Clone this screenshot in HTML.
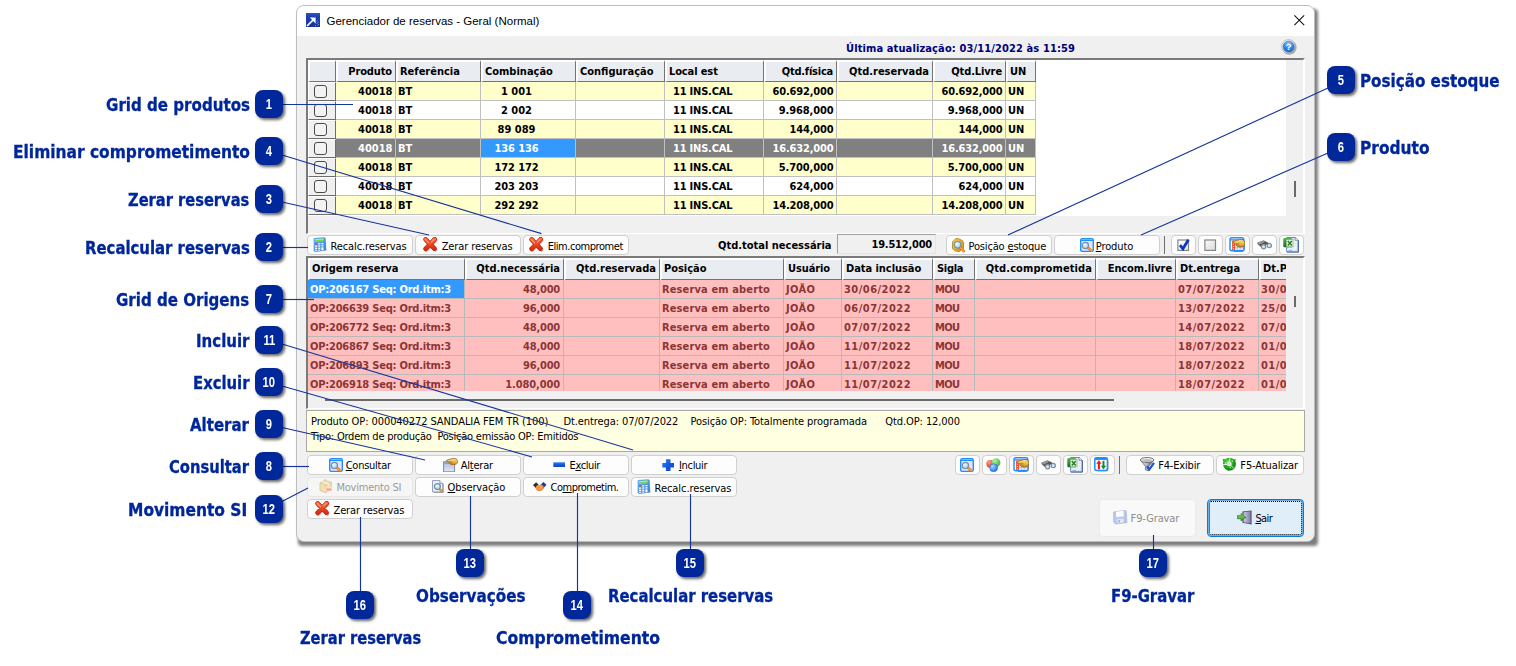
<!DOCTYPE html>
<html lang="pt-BR"><head><meta charset="utf-8"><title>Gerenciador de reservas</title>
<style>
*{box-sizing:border-box;margin:0;padding:0}
html,body{width:1516px;height:666px;overflow:hidden;background:#fff}
body{position:relative;font-family:"DejaVu Sans Condensed","Liberation Sans",sans-serif;font-size:11px;color:#000}
.a{position:absolute;white-space:pre}
#win{position:absolute;left:296px;top:5px;width:1019px;height:537px;background:#f0f0f0;border:1px solid #bdbdbd;border-radius:8px;overflow:hidden}
#shadow{position:absolute;left:298px;top:9px;width:1019.5px;height:536.5px;background:#7e7e7e;border-radius:4px;filter:blur(1.5px)}
#tb{position:absolute;left:0;top:0;width:100%;height:30px;background:#fff}
#title{position:absolute;left:29.5px;top:8px;font-family:"Liberation Sans",sans-serif;font-size:11.5px;line-height:14px;white-space:pre}
.grid{position:absolute;background:#f0f0f0;border-top:2px solid #7a7a7a;border-left:2px solid #7a7a7a;border-right:2px solid #fff;border-bottom:1px solid #fff;overflow:hidden}
.hc{position:absolute;background:#e9edf1;border-top:2px solid #fff;border-left:2px solid #fff;border-right:1px solid #737373;border-bottom:1px solid #737373;font-weight:bold;white-space:pre;overflow:hidden}
.c{position:absolute;border-right:1px solid #c0c0c0;border-bottom:1px solid #c0c0c0;font-weight:bold;white-space:pre;overflow:hidden;height:19px;line-height:18px;padding-top:1px}
.ic{position:absolute;background:#f0f0f0;border-top:1px solid #fff;border-left:1px solid #fff;border-right:1px solid #6d6d6d;border-bottom:1px solid #6d6d6d;height:19px}
.cb{position:absolute;left:5px;top:2px;width:13px;height:13px;border:1px solid #4a4a4a;border-radius:3px;background:#f3f3f3}
.btn{position:absolute;background:#fdfdfd;border:1px solid #d0d0d0;border-radius:4px;white-space:pre}
.btn span{position:absolute;white-space:pre;line-height:13px}
.btn svg{position:absolute}
u{text-decoration:underline;text-underline-offset:1px}
.badge{position:absolute;width:28px;height:28px;border-radius:8px;background:#00289a;box-shadow:2px 2px 3px rgba(0,0,0,.6);color:#fff;font-family:"Liberation Sans",sans-serif;font-weight:bold;font-size:14px;line-height:28px;text-align:center}
.badge span{display:inline-block;transform:scaleX(.8)}
.lbl{position:absolute;white-space:pre;font-weight:bold;font-size:17.5px;line-height:22px;color:#00279a;-webkit-text-stroke:.3px #00279a;transform-origin:0 0}
</style></head><body>
<div id="shadow"></div>
<div id="win">
<div id="tb"></div>
<div id="title">Gerenciador de reservas - Geral (Normal)</div>
<svg class="a" style="left:9px;top:7px;" width="14" height="14" viewBox="0 0 14 14"><defs><linearGradient id="g1" x1="0" y1="0" x2="0" y2="1"><stop offset="0" stop-color="#2c55c8"/><stop offset=".25" stop-color="#1c41b0"/><stop offset="1" stop-color="#16349a"/></linearGradient></defs><rect width="14" height="14" fill="url(#g1)"/><path d="M1 13 L7.2 6.8" stroke="#fff" stroke-width="1.7"/><path d="M3.8 4.6 H9.6 V10.6 Z" fill="#fff"/><path d="M11 8.5l1 -1M10.5 11l2-2M11.5 12.5l1.5-1.5M9 13l1-1" stroke="#7fa0e8" stroke-width=".9"/></svg>
<svg class="a" style="left:996.5999999999999px;top:8.8px" width="11" height="11" viewBox="0 0 11 11"><path d="M0.4 0.4 L10.2 10.2 M10.2 0.4 L0.4 10.2" stroke="#111" stroke-width="1.05" fill="none"/></svg>
<div class="a" style="left:549px;top:36px;font-weight:bold;color:#00007b;line-height:14px;letter-spacing:0.119px;">Última atualização: 03/11/2022 às 11:59</div>
<svg class="a" style="left:983.8px;top:33px;" width="16.5" height="16.5" viewBox="0 0 16.5 16.5"><defs><radialGradient id="g2" cx="50%" cy="22%" r="85%"><stop offset="0" stop-color="#8ccaff"/><stop offset=".55" stop-color="#2f86e8"/><stop offset="1" stop-color="#1858bd"/></radialGradient><linearGradient id="g3" x1="0" y1="0" x2="1" y2="1"><stop offset="0" stop-color="#ffffff"/><stop offset=".5" stop-color="#e6e6e6"/><stop offset="1" stop-color="#7d7d7d"/></linearGradient></defs><circle cx="8.4" cy="8.6" r="7.2" fill="#6a6a6a" opacity=".5"/><circle cx="7.6" cy="7.6" r="7" fill="url(#g3)" stroke="#a6a6a6" stroke-width=".7"/><circle cx="7.6" cy="7.6" r="5.5" fill="url(#g2)" stroke="#2a62b8" stroke-width=".5"/><text x="7.6" y="11.1" font-family="Liberation Sans,sans-serif" font-weight="bold" font-size="9.5" fill="#fff" text-anchor="middle">?</text></svg>
<div class="grid" style="left:9px;top:52px;width:999px;height:176px">
<div class="a" style="left:0;top:0;width:978px;height:156px;background:#fff"></div>
<div class="hc" style="left:0px;top:0;width:28px;height:22px;line-height:19px;padding-left:2px;"></div><div class="hc" style="left:28px;top:0;width:60px;height:22px;line-height:19px;padding-right:3px;text-align:right;letter-spacing:-0.123px;">Produto</div><div class="hc" style="left:88px;top:0;width:85px;height:22px;line-height:19px;padding-left:2px;">Referência</div><div class="hc" style="left:173px;top:0;width:95px;height:22px;line-height:19px;padding-left:2px;">Combinação</div><div class="hc" style="left:268px;top:0;width:89px;height:22px;line-height:19px;padding-left:2px;">Configuração</div><div class="hc" style="left:357px;top:0;width:99px;height:22px;line-height:19px;padding-left:2px;letter-spacing:-0.12px;">Local est</div><div class="hc" style="left:456px;top:0;width:73px;height:22px;line-height:19px;padding-right:3px;text-align:right;letter-spacing:-0.227px;">Qtd.física</div><div class="hc" style="left:529px;top:0;width:96px;height:22px;line-height:19px;padding-right:3px;text-align:right;">Qtd.reservada</div><div class="hc" style="left:625px;top:0;width:73px;height:22px;line-height:19px;padding-right:3px;text-align:right;letter-spacing:-0.109px;">Qtd.Livre</div><div class="hc" style="left:698px;top:0;width:30px;height:22px;line-height:19px;padding-left:2px;">UN</div>
<div class="ic" style="left:0;top:22px;width:28px"><div class="cb"></div></div><div class="c" style="left:28px;top:22px;width:60px;background:#ffffcc;color:#000;padding-right:2.5px;text-align:right;">40018</div><div class="c" style="left:88px;top:22px;width:85px;background:#ffffcc;color:#000;padding-left:2px;">BT</div><div class="c" style="left:173px;top:22px;width:95px;background:#ffffcc;color:#000;padding-right:23px;text-align:center;">1 001</div><div class="c" style="left:268px;top:22px;width:89px;background:#ffffcc;color:#000;padding-left:2px;"></div><div class="c" style="left:357px;top:22px;width:99px;background:#ffffcc;color:#000;padding-left:8px;letter-spacing:-0.205px;">11 INS.CAL</div><div class="c" style="left:456px;top:22px;width:73px;background:#ffffcc;color:#000;padding-right:2.5px;text-align:right;letter-spacing:-0.161px;">60.692,000</div><div class="c" style="left:529px;top:22px;width:96px;background:#ffffcc;color:#000;padding-right:2.5px;text-align:right;"></div><div class="c" style="left:625px;top:22px;width:73px;background:#ffffcc;color:#000;padding-right:2.5px;text-align:right;letter-spacing:-0.161px;">60.692,000</div><div class="c" style="left:698px;top:22px;width:30px;background:#ffffcc;color:#000;padding-left:2px;">UN</div>
<div class="ic" style="left:0;top:41px;width:28px"><div class="cb"></div></div><div class="c" style="left:28px;top:41px;width:60px;background:#ffffff;color:#000;padding-right:2.5px;text-align:right;">40018</div><div class="c" style="left:88px;top:41px;width:85px;background:#ffffff;color:#000;padding-left:2px;">BT</div><div class="c" style="left:173px;top:41px;width:95px;background:#ffffff;color:#000;padding-right:23px;text-align:center;">2 002</div><div class="c" style="left:268px;top:41px;width:89px;background:#ffffff;color:#000;padding-left:2px;"></div><div class="c" style="left:357px;top:41px;width:99px;background:#ffffff;color:#000;padding-left:8px;letter-spacing:-0.205px;">11 INS.CAL</div><div class="c" style="left:456px;top:41px;width:73px;background:#ffffff;color:#000;padding-right:2.5px;text-align:right;letter-spacing:-0.115px;">9.968,000</div><div class="c" style="left:529px;top:41px;width:96px;background:#ffffff;color:#000;padding-right:2.5px;text-align:right;"></div><div class="c" style="left:625px;top:41px;width:73px;background:#ffffff;color:#000;padding-right:2.5px;text-align:right;letter-spacing:-0.115px;">9.968,000</div><div class="c" style="left:698px;top:41px;width:30px;background:#ffffff;color:#000;padding-left:2px;">UN</div>
<div class="ic" style="left:0;top:60px;width:28px"><div class="cb"></div></div><div class="c" style="left:28px;top:60px;width:60px;background:#ffffcc;color:#000;padding-right:2.5px;text-align:right;">40018</div><div class="c" style="left:88px;top:60px;width:85px;background:#ffffcc;color:#000;padding-left:2px;">BT</div><div class="c" style="left:173px;top:60px;width:95px;background:#ffffcc;color:#000;padding-right:23px;text-align:center;">89 089</div><div class="c" style="left:268px;top:60px;width:89px;background:#ffffcc;color:#000;padding-left:2px;"></div><div class="c" style="left:357px;top:60px;width:99px;background:#ffffcc;color:#000;padding-left:8px;letter-spacing:-0.205px;">11 INS.CAL</div><div class="c" style="left:456px;top:60px;width:73px;background:#ffffcc;color:#000;padding-right:2.5px;text-align:right;letter-spacing:-0.154px;">144,000</div><div class="c" style="left:529px;top:60px;width:96px;background:#ffffcc;color:#000;padding-right:2.5px;text-align:right;"></div><div class="c" style="left:625px;top:60px;width:73px;background:#ffffcc;color:#000;padding-right:2.5px;text-align:right;letter-spacing:-0.154px;">144,000</div><div class="c" style="left:698px;top:60px;width:30px;background:#ffffcc;color:#000;padding-left:2px;">UN</div>
<div class="ic" style="left:0;top:79px;width:28px"><div class="cb"></div></div><div class="c" style="left:28px;top:79px;width:60px;background:#808080;color:#fff;padding-right:2.5px;text-align:right;">40018</div><div class="c" style="left:88px;top:79px;width:85px;background:#808080;color:#fff;padding-left:2px;">BT</div><div class="c" style="left:173px;top:79px;width:95px;background:#808080;color:#fff;padding-right:23px;text-align:center;background:#3399ff;letter-spacing:-0.074px;">136 136</div><div class="c" style="left:268px;top:79px;width:89px;background:#808080;color:#fff;padding-left:2px;"></div><div class="c" style="left:357px;top:79px;width:99px;background:#808080;color:#fff;padding-left:8px;letter-spacing:-0.205px;">11 INS.CAL</div><div class="c" style="left:456px;top:79px;width:73px;background:#808080;color:#fff;padding-right:2.5px;text-align:right;letter-spacing:-0.161px;">16.632,000</div><div class="c" style="left:529px;top:79px;width:96px;background:#808080;color:#fff;padding-right:2.5px;text-align:right;"></div><div class="c" style="left:625px;top:79px;width:73px;background:#808080;color:#fff;padding-right:2.5px;text-align:right;letter-spacing:-0.161px;">16.632,000</div><div class="c" style="left:698px;top:79px;width:30px;background:#808080;color:#fff;padding-left:2px;">UN</div>
<div class="ic" style="left:0;top:98px;width:28px"><div class="cb"></div></div><div class="c" style="left:28px;top:98px;width:60px;background:#ffffcc;color:#000;padding-right:2.5px;text-align:right;">40018</div><div class="c" style="left:88px;top:98px;width:85px;background:#ffffcc;color:#000;padding-left:2px;">BT</div><div class="c" style="left:173px;top:98px;width:95px;background:#ffffcc;color:#000;padding-right:23px;text-align:center;letter-spacing:-0.074px;">172 172</div><div class="c" style="left:268px;top:98px;width:89px;background:#ffffcc;color:#000;padding-left:2px;"></div><div class="c" style="left:357px;top:98px;width:99px;background:#ffffcc;color:#000;padding-left:8px;letter-spacing:-0.205px;">11 INS.CAL</div><div class="c" style="left:456px;top:98px;width:73px;background:#ffffcc;color:#000;padding-right:2.5px;text-align:right;letter-spacing:-0.115px;">5.700,000</div><div class="c" style="left:529px;top:98px;width:96px;background:#ffffcc;color:#000;padding-right:2.5px;text-align:right;"></div><div class="c" style="left:625px;top:98px;width:73px;background:#ffffcc;color:#000;padding-right:2.5px;text-align:right;letter-spacing:-0.115px;">5.700,000</div><div class="c" style="left:698px;top:98px;width:30px;background:#ffffcc;color:#000;padding-left:2px;">UN</div>
<div class="ic" style="left:0;top:117px;width:28px"><div class="cb"></div></div><div class="c" style="left:28px;top:117px;width:60px;background:#ffffff;color:#000;padding-right:2.5px;text-align:right;">40018</div><div class="c" style="left:88px;top:117px;width:85px;background:#ffffff;color:#000;padding-left:2px;">BT</div><div class="c" style="left:173px;top:117px;width:95px;background:#ffffff;color:#000;padding-right:23px;text-align:center;letter-spacing:-0.074px;">203 203</div><div class="c" style="left:268px;top:117px;width:89px;background:#ffffff;color:#000;padding-left:2px;"></div><div class="c" style="left:357px;top:117px;width:99px;background:#ffffff;color:#000;padding-left:8px;letter-spacing:-0.205px;">11 INS.CAL</div><div class="c" style="left:456px;top:117px;width:73px;background:#ffffff;color:#000;padding-right:2.5px;text-align:right;letter-spacing:-0.154px;">624,000</div><div class="c" style="left:529px;top:117px;width:96px;background:#ffffff;color:#000;padding-right:2.5px;text-align:right;"></div><div class="c" style="left:625px;top:117px;width:73px;background:#ffffff;color:#000;padding-right:2.5px;text-align:right;letter-spacing:-0.154px;">624,000</div><div class="c" style="left:698px;top:117px;width:30px;background:#ffffff;color:#000;padding-left:2px;">UN</div>
<div class="ic" style="left:0;top:136px;width:28px"><div class="cb"></div></div><div class="c" style="left:28px;top:136px;width:60px;background:#ffffcc;color:#000;padding-right:2.5px;text-align:right;">40018</div><div class="c" style="left:88px;top:136px;width:85px;background:#ffffcc;color:#000;padding-left:2px;">BT</div><div class="c" style="left:173px;top:136px;width:95px;background:#ffffcc;color:#000;padding-right:23px;text-align:center;letter-spacing:-0.074px;">292 292</div><div class="c" style="left:268px;top:136px;width:89px;background:#ffffcc;color:#000;padding-left:2px;"></div><div class="c" style="left:357px;top:136px;width:99px;background:#ffffcc;color:#000;padding-left:8px;letter-spacing:-0.205px;">11 INS.CAL</div><div class="c" style="left:456px;top:136px;width:73px;background:#ffffcc;color:#000;padding-right:2.5px;text-align:right;letter-spacing:-0.161px;">14.208,000</div><div class="c" style="left:529px;top:136px;width:96px;background:#ffffcc;color:#000;padding-right:2.5px;text-align:right;"></div><div class="c" style="left:625px;top:136px;width:73px;background:#ffffcc;color:#000;padding-right:2.5px;text-align:right;letter-spacing:-0.161px;">14.208,000</div><div class="c" style="left:698px;top:136px;width:30px;background:#ffffcc;color:#000;padding-left:2px;">UN</div>
<div class="a" style="left:986px;top:121px;width:2px;height:16px;background:#6a6a6a"></div>
</div>
<div class="btn" style="left:10px;top:229px;width:106px;height:20px;"><svg class="a" style="left:5px;top:1px;" width="14" height="15.5" viewBox="0 0 14 15.5"><defs><linearGradient id="g4" x1="0" y1="0" x2="1" y2="1"><stop offset="0" stop-color="#6ab4f8"/><stop offset="1" stop-color="#2f7fde"/></linearGradient></defs><path d="M1.6 1.6 L12.6 0.9 L13.4 13.6 L1.6 15 Z" fill="#355a8c" opacity=".7"/><path d="M0.6 1 L11.8 0.2 L12.4 13 L0.6 14.3 Z" fill="url(#g4)"/><path d="M2 2.2 L10.6 1.6 L10.7 4.4 L2 5 Z" fill="#7fd44a"/><path d="M2 2.2 L10.6 1.6 L10.65 2.6 L2 3.2 Z" fill="#b9ec8e"/><g fill="#fff"><rect x="5.2" y="6.2" width="2.1" height="1.3"/><rect x="8.4" y="6" width="2.1" height="1.3"/><rect x="2" y="8.5" width="2.1" height="1.3"/><rect x="5.2" y="8.4" width="2.1" height="1.3"/><rect x="8.4" y="8.2" width="2.1" height="1.3"/><rect x="2" y="10.7" width="2.1" height="1.3"/><rect x="5.2" y="10.6" width="2.1" height="1.3"/><rect x="8.4" y="10.3" width="2.1" height="3"/><rect x="2" y="12.7" width="2.1" height="1.1"/><rect x="5.2" y="12.5" width="2.1" height="1.1"/></g><rect x="2" y="6.3" width="2.2" height="1.3" fill="#e8402c"/></svg><span style="left:22.5px;top:3.6px;letter-spacing:-0.108px">Recalc.reservas</span></div>
<div class="btn" style="left:118px;top:229px;width:106px;height:20px;"><svg class="a" style="left:7px;top:1px;" width="15" height="15" viewBox="0 0 15 15"><defs><linearGradient id="g5" x1="0" y1="0" x2="0" y2="1"><stop offset="0" stop-color="#ff6a3c"/><stop offset="1" stop-color="#e02a10"/></linearGradient></defs><path d="M3.4 3.2 L12.2 12.4 M12.4 3 L3.4 12.6" stroke="#7a2a1a" stroke-opacity=".45" stroke-width="4.2" stroke-linecap="round" fill="none"/><path d="M2.6 2.4 L11.4 11.6 M11.6 2.2 L2.6 11.8" stroke="#b3260c" stroke-width="4.6" stroke-linecap="round" fill="none"/><path d="M2.6 2.4 L11.4 11.6 M11.6 2.2 L2.6 11.8" stroke="url(#g5)" stroke-width="3.4" stroke-linecap="round" fill="none"/><path d="M2.4 2.6 L5.6 5.8 M11 2.4 L8.6 5" stroke="#ff9a70" stroke-width="1.1" stroke-linecap="round" fill="none"/></svg><span style="left:25.7px;top:3.6px;letter-spacing:-0.115px">Zerar reservas</span></div>
<div class="btn" style="left:226px;top:229px;width:106px;height:20px;"><svg class="a" style="left:5px;top:1px;" width="15" height="15" viewBox="0 0 15 15"><defs><linearGradient id="g6" x1="0" y1="0" x2="0" y2="1"><stop offset="0" stop-color="#ff6a3c"/><stop offset="1" stop-color="#e02a10"/></linearGradient></defs><path d="M3.4 3.2 L12.2 12.4 M12.4 3 L3.4 12.6" stroke="#7a2a1a" stroke-opacity=".45" stroke-width="4.2" stroke-linecap="round" fill="none"/><path d="M2.6 2.4 L11.4 11.6 M11.6 2.2 L2.6 11.8" stroke="#b3260c" stroke-width="4.6" stroke-linecap="round" fill="none"/><path d="M2.6 2.4 L11.4 11.6 M11.6 2.2 L2.6 11.8" stroke="url(#g6)" stroke-width="3.4" stroke-linecap="round" fill="none"/><path d="M2.4 2.6 L5.6 5.8 M11 2.4 L8.6 5" stroke="#ff9a70" stroke-width="1.1" stroke-linecap="round" fill="none"/></svg><span style="left:23.7px;top:3.6px;letter-spacing:-0.447px">Elim.compromet</span></div>
<div class="a" style="left:421px;top:232.5px;font-weight:bold;line-height:14px">Qtd.total necessária</div>
<div class="a" style="left:540px;top:228px;width:99px;height:20px;border:1px solid #a0a0a0;border-right-color:#e3e3e3;border-bottom-color:#e3e3e3;background:#f0f0f0;font-weight:bold;text-align:right;padding-right:3px;line-height:19px;letter-spacing:-0.211px;">19.512,000</div>
<div class="btn" style="left:649px;top:229px;width:106px;height:20px;"><svg class="a" style="left:5px;top:1.6px;" width="14" height="15" viewBox="0 0 14 15"><defs><linearGradient id="g7" x1="0" y1="0" x2="1" y2="1"><stop offset="0" stop-color="#f6d060"/><stop offset="1" stop-color="#c8900f"/></linearGradient></defs><path d="M3.2 1.2 L5 0.2 L7.2 1 L10.4 2.6 L11.6 5 L11.4 10.6 L7 13.6 L3 12.8 L0.4 10.6 L0.4 4 Z" fill="url(#g7)" stroke="#b07a08" stroke-width=".8"/><defs><radialGradient id="g8" cx="40%" cy="35%" r="70%"><stop offset="0" stop-color="#eefaff"/><stop offset="1" stop-color="#8fd0f5"/></radialGradient></defs><circle cx="5.6" cy="6.8" r="3.3" fill="url(#g8)" stroke="#7f8c99" stroke-width="1.2"/><line x1="8.6" y1="10" x2="11.8" y2="13.2" stroke="#c8641a" stroke-width="2.6" stroke-linecap="round"/><line x1="8.6" y1="10" x2="11.8" y2="13.2" stroke="#ffa035" stroke-width="1.8" stroke-linecap="round"/></svg><span style="left:21.5px;top:3.6px;letter-spacing:-0.164px">Posição <u>e</u>stoque</span></div>
<div class="btn" style="left:757px;top:229px;width:106px;height:20px;"><svg class="a" style="left:25px;top:1.8px;" width="14.5" height="15" viewBox="0 0 14.5 15"><rect x="0.7" y="0.8" width="12.6" height="12.6" rx="1.6" fill="#e3e1ff" stroke="#1e90ff" stroke-width="1.4"/><rect x="0.7" y="0.6" width="12.6" height="2.4" rx="1" fill="#1e90ff"/><rect x="1.6" y="1" width="10.8" height=".9" fill="#7cc4ff"/><defs><radialGradient id="g9" cx="40%" cy="35%" r="70%"><stop offset="0" stop-color="#eefaff"/><stop offset="1" stop-color="#8fd0f5"/></radialGradient></defs><circle cx="5.4" cy="7.4" r="3.1" fill="url(#g9)" stroke="#7f8c99" stroke-width="1.2"/><line x1="8.5" y1="10.3" x2="11.3" y2="12.7" stroke="#c8641a" stroke-width="2.5" stroke-linecap="round"/><line x1="8.5" y1="10.3" x2="11.3" y2="12.7" stroke="#ffa035" stroke-width="1.7" stroke-linecap="round"/></svg><span style="left:40.7px;top:3.6px;letter-spacing:-0.077px"><u>P</u>roduto</span></div>
<div class="a" style="left:867px;top:230px;width:1px;height:18px;background:#6e6e6e"></div>
<div class="btn" style="left:874px;top:229px;width:24.5px;height:20px;"><svg class="a" style="left:4.6px;top:1.6px;" width="13.5" height="14" viewBox="0 0 13.5 14"><defs><linearGradient id="g10" x1="0" y1="0" x2="1" y2="1"><stop offset="0" stop-color="#fff"/><stop offset="1" stop-color="#e4e4e4"/></linearGradient></defs><rect x="0.9" y="2" width="10.6" height="10.4" fill="url(#g10)" stroke="#858585" stroke-width="1.2"/><path d="M3 7.2 L5.9 10.8 L11.4 1.8" stroke="#0c36bd" stroke-width="2.7" fill="none" stroke-linejoin="miter"/></svg></div>
<div class="btn" style="left:901px;top:229px;width:24.5px;height:20px;"><svg class="a" style="left:4.6px;top:1.6px;" width="13.5" height="14" viewBox="0 0 13.5 14"><defs><linearGradient id="g11" x1="0" y1="0" x2="1" y2="1"><stop offset="0" stop-color="#fbfbfb"/><stop offset="1" stop-color="#d9d9d9"/></linearGradient></defs><rect x="0.9" y="2" width="10.6" height="10.4" fill="url(#g11)" stroke="#858585" stroke-width="1.2"/></svg></div>
<div class="btn" style="left:928px;top:229px;width:24.5px;height:20px;"><svg class="a" style="left:2.6px;top:1px;" width="16.8" height="15.2" viewBox="0 0 16.8 15.2"><path d="M15.3 4 V12.4 Q15.3 14.4 13.4 14.4 H5" stroke="#5a3c14" stroke-opacity=".75" stroke-width="1" fill="none"/><rect x="1" y="0.8" width="13.8" height="13" rx="2" fill="#fff" stroke="#1e90ff" stroke-width="1.5"/><path d="M1.6 2.9 H14.2" stroke="#1e90ff" stroke-width="1.3"/><rect x="4.6" y="3.6" width="9.6" height="9.4" fill="#e4e2ff"/><path d="M4.6 5.9H14.2M4.6 8.2H14.2M4.6 10.5H14.2M8.4 3.6V13M11.3 3.6V13" stroke="#b4b0f0" stroke-width=".7"/><rect x="3.1" y="3.6" width="2.9" height="9.4" fill="#ff4d22"/><path d="M4.55 4.4v.9M4.55 6.7v.9M4.55 9v.9M4.55 11.3v.9" stroke="#ffe2d6" stroke-width="1.1"/><defs><linearGradient id="g12" x1="0" y1="0" x2="0" y2="1"><stop offset="0" stop-color="#fde29a"/><stop offset=".55" stop-color="#eab84c"/><stop offset="1" stop-color="#c98a1e"/></linearGradient></defs><g transform="translate(10.4,6.1) scale(1.0,1.22)"><path d="M-6.4 -0.6 C-5.6 -1.6 -3.2 -2.2 -1.6 -2.4 C-0.6 -3 1 -3.2 2.4 -3 C4.4 -2.8 5.6 -1.4 5.6 0.2 C5.6 2.2 3.6 3.2 1 3.2 C-1 3.2 -2.6 2.8 -3.2 1.6 C-3.4 1 -3 0.6 -3 0.6 C-4.2 0.6 -5.6 0.4 -6.4 -0.6 Z" fill="url(#g12)" stroke="#96640e" stroke-width=".8"/><path d="M-3 0.6 C-2 0.2 -0.8 0.2 0.2 0.8 M-2.6 1.8 C-1.6 1.4 -0.6 1.6 0 2" stroke="#96640e" stroke-width=".55" fill="none"/></g></svg></div>
<div class="btn" style="left:955px;top:229px;width:24.5px;height:20px;"><svg class="a" style="left:3.6px;top:3.8px;" width="15" height="10" viewBox="0 0 15 10"><defs><linearGradient id="g13" x1="0" y1="0" x2="1" y2="1"><stop offset="0" stop-color="#9a9a9a"/><stop offset=".5" stop-color="#555"/><stop offset="1" stop-color="#3a3a3a"/></linearGradient></defs><path d="M0.4 2.6 L6.4 0.2 L9.6 1.8 L13.8 4.6 L12.6 5.4 L9.8 4.2 L8.8 5.2 L6.8 4.2 L4.6 7.4 L0.4 4 Z" fill="url(#g13)"/><path d="M1 2.8 L6.2 0.9 L8 1.8 L2.8 4.2 Z" fill="#b0b0b0" opacity=".7"/><defs><radialGradient id="g14" cx="40%" cy="35%" r="70%"><stop offset="0" stop-color="#eefaff"/><stop offset="1" stop-color="#8fd0f5"/></radialGradient></defs><circle cx="6.6" cy="6.7" r="2.15" fill="url(#g14)" stroke="#7f8c99" stroke-width="1.2"/><defs><radialGradient id="g15" cx="40%" cy="35%" r="70%"><stop offset="0" stop-color="#eefaff"/><stop offset="1" stop-color="#8fd0f5"/></radialGradient></defs><circle cx="12.3" cy="5.6" r="2.15" fill="url(#g15)" stroke="#7f8c99" stroke-width="1.2"/></svg></div>
<div class="btn" style="left:982px;top:229px;width:24.5px;height:20px;"><svg class="a" style="left:2.6px;top:1px;" width="16.5" height="16" viewBox="0 0 16.5 16"><defs><linearGradient id="g16" x1="0" y1="0" x2="0" y2="1"><stop offset="0" stop-color="#58b552"/><stop offset="1" stop-color="#0a6e1e"/></linearGradient></defs><path d="M4 0.6 H12.6 L15.8 3.8 V15.6 H4 Z" fill="#20406e"/><path d="M3.6 0.5 H12.2 L15 3.3 V14.8 H3.6 Z" fill="#dbe6fb" stroke="#5478b8" stroke-width=".8"/><path d="M12.2 0.5 V3.3 H15" fill="#fff" stroke="#5478b8" stroke-width=".7"/><path d="M11.4 4.6v1.3M11.4 6.9v1.3M11.4 9.2v1.3M13.2 4.6v1.3M13.2 6.9v1.3M13.2 9.2v1.3" stroke="#fff" stroke-width="1.1"/><path d="M5 12 H12 M12.4 9.4 V12.6" stroke="#f4f8ff" stroke-width="1.1"/><path d="M5.6 13.4 H9.2" stroke="#8aa6e0" stroke-width=".9"/><path d="M0.3 2.2 Q0.3 1 1.6 1 H8.8 V3 H3 V8.4 H8.8 V10.2 H1.6 Q0.3 10.2 0.3 9 Z" fill="url(#g16)"/><rect x="3.4" y="2.6" width="6.6" height="7.2" fill="#e6f2dc" stroke="#7fb070" stroke-width=".6"/><path d="M4.8 4 L8.8 8.6 M8.8 4 L4.8 8.6" stroke="#2a7d2e" stroke-width="1.5"/></svg></div>
<div class="grid" style="left:9px;top:250px;width:999px;height:153px">
<div class="a" style="left:0;top:0;width:978px;height:133px;overflow:hidden;background:#ffbfbf">
<div class="hc" style="left:0px;top:0;width:157px;height:22px;line-height:18px;padding-left:2px;">Origem reserva</div><div class="hc" style="left:157px;top:0;width:99px;height:22px;line-height:18px;padding-right:3px;text-align:right;">Qtd.necessária</div><div class="hc" style="left:256px;top:0;width:96px;height:22px;line-height:18px;padding-right:3px;text-align:right;">Qtd.reservada</div><div class="hc" style="left:352px;top:0;width:124px;height:22px;line-height:18px;padding-left:2px;letter-spacing:-0.027px;">Posição</div><div class="hc" style="left:476px;top:0;width:58px;height:22px;line-height:18px;padding-left:2px;letter-spacing:-0.105px;">Usuário</div><div class="hc" style="left:534px;top:0;width:91px;height:22px;line-height:18px;padding-left:2px;letter-spacing:-0.047px;">Data inclusão</div><div class="hc" style="left:625px;top:0;width:42px;height:22px;line-height:18px;padding-left:2px;letter-spacing:-0.284px;">Sigla</div><div class="hc" style="left:667px;top:0;width:121px;height:22px;line-height:18px;padding-right:3px;text-align:right;letter-spacing:0.101px;">Qtd.comprometida</div><div class="hc" style="left:788px;top:0;width:80px;height:22px;line-height:18px;padding-right:3px;text-align:right;letter-spacing:-0.102px;">Encom.livre</div><div class="hc" style="left:868px;top:0;width:83px;height:22px;line-height:18px;padding-left:2px;letter-spacing:-0.056px;">Dt.entrega</div><div class="hc" style="left:951px;top:0;width:71px;height:22px;line-height:18px;padding-left:2px;">Dt.P</div>
<div class="c" style="left:0px;top:22px;width:157px;color:#8c3535;border-color:#b9b9b9;background:#3399ff;color:#fff;padding-left:2px;letter-spacing:-0.214px;">OP:206167 Seq: Ord.itm:3</div><div class="c" style="left:157px;top:22px;width:99px;color:#8c3535;border-color:#b9b9b9;padding-right:3px;text-align:right;letter-spacing:-0.201px;">48,000</div><div class="c" style="left:256px;top:22px;width:96px;color:#8c3535;border-color:#b9b9b9;padding-right:3px;text-align:right;"></div><div class="c" style="left:352px;top:22px;width:124px;color:#8c3535;border-color:#b9b9b9;padding-left:2px;letter-spacing:0.131px;">Reserva em aberto</div><div class="c" style="left:476px;top:22px;width:58px;color:#8c3535;border-color:#b9b9b9;padding-left:2px;letter-spacing:0.344px;">JOÃO</div><div class="c" style="left:534px;top:22px;width:91px;color:#8c3535;border-color:#b9b9b9;padding-left:2px;letter-spacing:0.467px;">30/06/2022</div><div class="c" style="left:625px;top:22px;width:42px;color:#8c3535;border-color:#b9b9b9;padding-left:2px;letter-spacing:-0.682px;">MOU</div><div class="c" style="left:667px;top:22px;width:121px;color:#8c3535;border-color:#b9b9b9;padding-right:3px;text-align:right;"></div><div class="c" style="left:788px;top:22px;width:80px;color:#8c3535;border-color:#b9b9b9;padding-right:3px;text-align:right;"></div><div class="c" style="left:868px;top:22px;width:83px;color:#8c3535;border-color:#b9b9b9;padding-left:2px;letter-spacing:0.467px;">07/07/2022</div><div class="c" style="left:951px;top:22px;width:71px;color:#8c3535;border-color:#b9b9b9;padding-left:2px;letter-spacing:0.467px;">30/07/2022</div>
<div class="c" style="left:0px;top:41px;width:157px;color:#8c3535;border-color:#b9b9b9;padding-left:2px;letter-spacing:-0.214px;">OP:206639 Seq: Ord.itm:3</div><div class="c" style="left:157px;top:41px;width:99px;color:#8c3535;border-color:#b9b9b9;padding-right:3px;text-align:right;letter-spacing:-0.201px;">96,000</div><div class="c" style="left:256px;top:41px;width:96px;color:#8c3535;border-color:#b9b9b9;padding-right:3px;text-align:right;"></div><div class="c" style="left:352px;top:41px;width:124px;color:#8c3535;border-color:#b9b9b9;padding-left:2px;letter-spacing:0.131px;">Reserva em aberto</div><div class="c" style="left:476px;top:41px;width:58px;color:#8c3535;border-color:#b9b9b9;padding-left:2px;letter-spacing:0.344px;">JOÃO</div><div class="c" style="left:534px;top:41px;width:91px;color:#8c3535;border-color:#b9b9b9;padding-left:2px;letter-spacing:0.467px;">06/07/2022</div><div class="c" style="left:625px;top:41px;width:42px;color:#8c3535;border-color:#b9b9b9;padding-left:2px;letter-spacing:-0.682px;">MOU</div><div class="c" style="left:667px;top:41px;width:121px;color:#8c3535;border-color:#b9b9b9;padding-right:3px;text-align:right;"></div><div class="c" style="left:788px;top:41px;width:80px;color:#8c3535;border-color:#b9b9b9;padding-right:3px;text-align:right;"></div><div class="c" style="left:868px;top:41px;width:83px;color:#8c3535;border-color:#b9b9b9;padding-left:2px;letter-spacing:0.467px;">13/07/2022</div><div class="c" style="left:951px;top:41px;width:71px;color:#8c3535;border-color:#b9b9b9;padding-left:2px;letter-spacing:0.467px;">25/07/2022</div>
<div class="c" style="left:0px;top:60px;width:157px;color:#8c3535;border-color:#b9b9b9;padding-left:2px;letter-spacing:-0.214px;">OP:206772 Seq: Ord.itm:3</div><div class="c" style="left:157px;top:60px;width:99px;color:#8c3535;border-color:#b9b9b9;padding-right:3px;text-align:right;letter-spacing:-0.201px;">48,000</div><div class="c" style="left:256px;top:60px;width:96px;color:#8c3535;border-color:#b9b9b9;padding-right:3px;text-align:right;"></div><div class="c" style="left:352px;top:60px;width:124px;color:#8c3535;border-color:#b9b9b9;padding-left:2px;letter-spacing:0.131px;">Reserva em aberto</div><div class="c" style="left:476px;top:60px;width:58px;color:#8c3535;border-color:#b9b9b9;padding-left:2px;letter-spacing:0.344px;">JOÃO</div><div class="c" style="left:534px;top:60px;width:91px;color:#8c3535;border-color:#b9b9b9;padding-left:2px;letter-spacing:0.467px;">07/07/2022</div><div class="c" style="left:625px;top:60px;width:42px;color:#8c3535;border-color:#b9b9b9;padding-left:2px;letter-spacing:-0.682px;">MOU</div><div class="c" style="left:667px;top:60px;width:121px;color:#8c3535;border-color:#b9b9b9;padding-right:3px;text-align:right;"></div><div class="c" style="left:788px;top:60px;width:80px;color:#8c3535;border-color:#b9b9b9;padding-right:3px;text-align:right;"></div><div class="c" style="left:868px;top:60px;width:83px;color:#8c3535;border-color:#b9b9b9;padding-left:2px;letter-spacing:0.467px;">14/07/2022</div><div class="c" style="left:951px;top:60px;width:71px;color:#8c3535;border-color:#b9b9b9;padding-left:2px;letter-spacing:0.467px;">07/07/2022</div>
<div class="c" style="left:0px;top:79px;width:157px;color:#8c3535;border-color:#b9b9b9;padding-left:2px;letter-spacing:-0.214px;">OP:206867 Seq: Ord.itm:3</div><div class="c" style="left:157px;top:79px;width:99px;color:#8c3535;border-color:#b9b9b9;padding-right:3px;text-align:right;letter-spacing:-0.201px;">48,000</div><div class="c" style="left:256px;top:79px;width:96px;color:#8c3535;border-color:#b9b9b9;padding-right:3px;text-align:right;"></div><div class="c" style="left:352px;top:79px;width:124px;color:#8c3535;border-color:#b9b9b9;padding-left:2px;letter-spacing:0.131px;">Reserva em aberto</div><div class="c" style="left:476px;top:79px;width:58px;color:#8c3535;border-color:#b9b9b9;padding-left:2px;letter-spacing:0.344px;">JOÃO</div><div class="c" style="left:534px;top:79px;width:91px;color:#8c3535;border-color:#b9b9b9;padding-left:2px;letter-spacing:0.467px;">11/07/2022</div><div class="c" style="left:625px;top:79px;width:42px;color:#8c3535;border-color:#b9b9b9;padding-left:2px;letter-spacing:-0.682px;">MOU</div><div class="c" style="left:667px;top:79px;width:121px;color:#8c3535;border-color:#b9b9b9;padding-right:3px;text-align:right;"></div><div class="c" style="left:788px;top:79px;width:80px;color:#8c3535;border-color:#b9b9b9;padding-right:3px;text-align:right;"></div><div class="c" style="left:868px;top:79px;width:83px;color:#8c3535;border-color:#b9b9b9;padding-left:2px;letter-spacing:0.467px;">18/07/2022</div><div class="c" style="left:951px;top:79px;width:71px;color:#8c3535;border-color:#b9b9b9;padding-left:2px;letter-spacing:0.467px;">01/07/2022</div>
<div class="c" style="left:0px;top:98px;width:157px;color:#8c3535;border-color:#b9b9b9;padding-left:2px;letter-spacing:-0.214px;">OP:206893 Seq: Ord.itm:3</div><div class="c" style="left:157px;top:98px;width:99px;color:#8c3535;border-color:#b9b9b9;padding-right:3px;text-align:right;letter-spacing:-0.201px;">96,000</div><div class="c" style="left:256px;top:98px;width:96px;color:#8c3535;border-color:#b9b9b9;padding-right:3px;text-align:right;"></div><div class="c" style="left:352px;top:98px;width:124px;color:#8c3535;border-color:#b9b9b9;padding-left:2px;letter-spacing:0.131px;">Reserva em aberto</div><div class="c" style="left:476px;top:98px;width:58px;color:#8c3535;border-color:#b9b9b9;padding-left:2px;letter-spacing:0.344px;">JOÃO</div><div class="c" style="left:534px;top:98px;width:91px;color:#8c3535;border-color:#b9b9b9;padding-left:2px;letter-spacing:0.467px;">11/07/2022</div><div class="c" style="left:625px;top:98px;width:42px;color:#8c3535;border-color:#b9b9b9;padding-left:2px;letter-spacing:-0.682px;">MOU</div><div class="c" style="left:667px;top:98px;width:121px;color:#8c3535;border-color:#b9b9b9;padding-right:3px;text-align:right;"></div><div class="c" style="left:788px;top:98px;width:80px;color:#8c3535;border-color:#b9b9b9;padding-right:3px;text-align:right;"></div><div class="c" style="left:868px;top:98px;width:83px;color:#8c3535;border-color:#b9b9b9;padding-left:2px;letter-spacing:0.467px;">18/07/2022</div><div class="c" style="left:951px;top:98px;width:71px;color:#8c3535;border-color:#b9b9b9;padding-left:2px;letter-spacing:0.467px;">01/07/2022</div>
<div class="c" style="left:0px;top:117px;width:157px;color:#8c3535;border-color:#b9b9b9;padding-left:2px;letter-spacing:-0.214px;">OP:206918 Seq: Ord.itm:3</div><div class="c" style="left:157px;top:117px;width:99px;color:#8c3535;border-color:#b9b9b9;padding-right:3px;text-align:right;letter-spacing:-0.115px;">1.080,000</div><div class="c" style="left:256px;top:117px;width:96px;color:#8c3535;border-color:#b9b9b9;padding-right:3px;text-align:right;"></div><div class="c" style="left:352px;top:117px;width:124px;color:#8c3535;border-color:#b9b9b9;padding-left:2px;letter-spacing:0.131px;">Reserva em aberto</div><div class="c" style="left:476px;top:117px;width:58px;color:#8c3535;border-color:#b9b9b9;padding-left:2px;letter-spacing:0.344px;">JOÃO</div><div class="c" style="left:534px;top:117px;width:91px;color:#8c3535;border-color:#b9b9b9;padding-left:2px;letter-spacing:0.467px;">11/07/2022</div><div class="c" style="left:625px;top:117px;width:42px;color:#8c3535;border-color:#b9b9b9;padding-left:2px;letter-spacing:-0.682px;">MOU</div><div class="c" style="left:667px;top:117px;width:121px;color:#8c3535;border-color:#b9b9b9;padding-right:3px;text-align:right;"></div><div class="c" style="left:788px;top:117px;width:80px;color:#8c3535;border-color:#b9b9b9;padding-right:3px;text-align:right;"></div><div class="c" style="left:868px;top:117px;width:83px;color:#8c3535;border-color:#b9b9b9;padding-left:2px;letter-spacing:0.467px;">18/07/2022</div><div class="c" style="left:951px;top:117px;width:71px;color:#8c3535;border-color:#b9b9b9;padding-left:2px;letter-spacing:0.467px;">01/07/2022</div>
</div>
<div class="a" style="left:986px;top:38px;width:2px;height:11px;background:#6a6a6a"></div>
<div class="a" style="left:17px;top:141px;width:789px;height:2px;background:#6a6a6a"></div>
</div>
<div class="a" style="left:9px;top:404px;width:999px;height:42px;background:#ffffe1;border:1px solid #a9a9a9"></div>
<div class="a" style="left:14px;top:409px;line-height:14px;letter-spacing:-0.084px">Produto OP: 000040272 SANDALIA FEM TR (100)     Dt.entrega: 07/07/2022    Posição OP: Totalmente programada      Qtd.OP: 12,000</div>
<div class="a" style="left:14px;top:424px;line-height:14px;letter-spacing:-0.23px">Tipo: Ordem de produção  Posição emissão OP: Emitidos</div>
<div class="btn" style="left:10px;top:449px;width:106px;height:20px;"><svg class="a" style="left:21px;top:1.8px;" width="14.5" height="15" viewBox="0 0 14.5 15"><rect x="0.7" y="0.8" width="12.6" height="12.6" rx="1.6" fill="#e3e1ff" stroke="#1e90ff" stroke-width="1.4"/><rect x="0.7" y="0.6" width="12.6" height="2.4" rx="1" fill="#1e90ff"/><rect x="1.6" y="1" width="10.8" height=".9" fill="#7cc4ff"/><defs><radialGradient id="g17" cx="40%" cy="35%" r="70%"><stop offset="0" stop-color="#eefaff"/><stop offset="1" stop-color="#8fd0f5"/></radialGradient></defs><circle cx="5.4" cy="7.4" r="3.1" fill="url(#g17)" stroke="#7f8c99" stroke-width="1.2"/><line x1="8.5" y1="10.3" x2="11.3" y2="12.7" stroke="#c8641a" stroke-width="2.5" stroke-linecap="round"/><line x1="8.5" y1="10.3" x2="11.3" y2="12.7" stroke="#ffa035" stroke-width="1.7" stroke-linecap="round"/></svg><span style="left:37.7px;top:3.0px;letter-spacing:-0.249px"><u>C</u>onsultar</span></div>
<div class="btn" style="left:118px;top:449px;width:106px;height:20px;"><svg class="a" style="left:26.8px;top:1.6px;" width="15.5" height="14.5" viewBox="0 0 15.5 14.5"><defs><linearGradient id="g18" x1="0" y1="0" x2="0" y2="1"><stop offset="0" stop-color="#aeb8de"/><stop offset="1" stop-color="#e4e8f6"/></linearGradient></defs><rect x="0.6" y="3.8" width="11" height="10" fill="url(#g18)" stroke="#7c89a6" stroke-width="1"/><rect x="1.2" y="4.4" width="9.8" height="1.6" fill="#8d9ccc"/><defs><linearGradient id="g19" x1="0" y1="0" x2="0" y2="1"><stop offset="0" stop-color="#fde29a"/><stop offset=".55" stop-color="#eab84c"/><stop offset="1" stop-color="#c98a1e"/></linearGradient></defs><g transform="translate(9.4,3.4) scale(0.98,0.98)"><path d="M-6.4 -0.6 C-5.6 -1.6 -3.2 -2.2 -1.6 -2.4 C-0.6 -3 1 -3.2 2.4 -3 C4.4 -2.8 5.6 -1.4 5.6 0.2 C5.6 2.2 3.6 3.2 1 3.2 C-1 3.2 -2.6 2.8 -3.2 1.6 C-3.4 1 -3 0.6 -3 0.6 C-4.2 0.6 -5.6 0.4 -6.4 -0.6 Z" fill="url(#g19)" stroke="#96640e" stroke-width=".8"/><path d="M-3 0.6 C-2 0.2 -0.8 0.2 0.2 0.8 M-2.6 1.8 C-1.6 1.4 -0.6 1.6 0 2" stroke="#96640e" stroke-width=".55" fill="none"/></g></svg><span style="left:44.8px;top:3.0px;letter-spacing:-0.241px">Al<u>t</u>erar</span></div>
<div class="btn" style="left:226px;top:449px;width:106px;height:20px;"><svg class="a" style="left:28.6px;top:6.4px;" width="12.6" height="5.4" viewBox="0 0 12.6 5.4"><defs><linearGradient id="g20" x1="0" y1="0" x2="0" y2="1"><stop offset="0" stop-color="#3f86f4"/><stop offset=".5" stop-color="#1358de"/><stop offset="1" stop-color="#0d47c4"/></linearGradient></defs><rect x="0.3" y="0.2" width="12" height="4.8" rx=".6" fill="url(#g20)"/></svg><span style="left:45.5px;top:3.0px;letter-spacing:-0.386px">E<u>x</u>cluir</span></div>
<div class="btn" style="left:334px;top:449px;width:106px;height:20px;"><svg class="a" style="left:29.8px;top:2.7px;" width="12.5" height="12.5" viewBox="0 0 12.5 12.5"><defs><linearGradient id="g21" x1="0" y1="0" x2="1" y2="1"><stop offset="0" stop-color="#3f86f4"/><stop offset=".5" stop-color="#1358de"/><stop offset="1" stop-color="#0d47c4"/></linearGradient></defs><path d="M3.9 0.3 H8.5 V3.9 H12.1 V8.5 H8.5 V12.1 H3.9 V8.5 H0.3 V3.9 H3.9 Z" fill="url(#g21)"/></svg><span style="left:46.9px;top:3.0px;letter-spacing:-0.298px"><u>I</u>ncluir</span></div>
<div class="btn" style="left:10px;top:471px;width:106px;height:20px;background:#f6f6f6;border-color:#e6e6e6;color:#9b9b9b;"><svg class="a" style="left:10.7px;top:1px;" width="13.6" height="14.4" viewBox="0 0 13.6 14.4"><g opacity=".62"><path d="M1 4 L6 1.4 L12.4 3.4 L12.4 10.6 L6.6 13.8 L1 11.4 Z" fill="#eed48a" stroke="#c9a64e" stroke-width=".8"/><path d="M1 4 L6.8 6.2 L12.4 3.4 M6.8 6.2 V13.6" stroke="#c9a64e" stroke-width=".8" fill="none"/><path d="M3.4 2.8 L9.4 5 L9.4 7 " stroke="#f7ebc0" stroke-width="1.4" fill="none"/><path d="M5.2 1.2 L6.4 0.2 L7.6 1.4" stroke="#c9a64e" stroke-width=".8" fill="none"/><rect x="6.6" y="9" width="6.4" height="3" rx=".6" fill="#ee6a6a" stroke="#fff" stroke-width=".7"/></g></svg><span style="left:28.5px;top:3.0px;letter-spacing:-0.24px">Movimento SI</span></div>
<div class="btn" style="left:118px;top:471px;width:106px;height:20px;"><svg class="a" style="left:15.6px;top:1.7px;" width="12.6" height="13.4" viewBox="0 0 12.6 13.4"><path d="M1.8 1.6 H8.8 L11.8 4.6 V13 H1.8 Z" fill="#7d7d7d" opacity=".6"/><path d="M0.6 0.6 H7.8 L10.8 3.6 V12 H0.6 Z" fill="#f3f6ff" stroke="#7f8db0" stroke-width=".9"/><path d="M7.8 0.6 V3.6 H10.8" fill="#dfe6fb" stroke="#7f8db0" stroke-width=".8"/><defs><radialGradient id="g22" cx="40%" cy="35%" r="70%"><stop offset="0" stop-color="#eefaff"/><stop offset="1" stop-color="#8fd0f5"/></radialGradient></defs><circle cx="5.4" cy="6.6" r="3" fill="url(#g22)" stroke="#7f8c99" stroke-width="1.2"/><line x1="8.4" y1="9.8" x2="9.6" y2="11" stroke="#c8641a" stroke-width="2.4000000000000004" stroke-linecap="round"/><line x1="8.4" y1="9.8" x2="9.6" y2="11" stroke="#ffa035" stroke-width="1.6" stroke-linecap="round"/></svg><span style="left:31.6px;top:3.0px;letter-spacing:-0.127px"><u>O</u>bservação</span></div>
<div class="btn" style="left:226px;top:471px;width:106px;height:20px;"><svg class="a" style="left:9px;top:4.4px;" width="13.6" height="9.6" viewBox="0 0 13.6 9.6"><defs><radialGradient id="g23" cx="45%" cy="35%" r="70%"><stop offset="0" stop-color="#ffb867"/><stop offset="1" stop-color="#e97a1c"/></radialGradient></defs><path d="M0 3 L3.2 0.2 L6.4 3.8 L3.2 6.6 Z" fill="#2e2e2e"/><path d="M13.5 2.8 L10.4 0 L7 3.6 L10.2 6.4 Z" fill="#1b3a9c"/><path d="M2.8 5 C3.4 3.2 5.6 2.4 6.8 3.2 C8.2 2.4 10 3 10.6 4.6 C11.2 6.4 9.8 8.8 6.8 9.2 C4 9.2 2.2 7 2.8 5 Z" fill="url(#g23)"/><path d="M4.6 5.6 C5.6 4.8 6.6 5 7.2 5.6" stroke="#b85a0c" stroke-width=".6" fill="none"/></svg><span style="left:26.6px;top:3.0px;letter-spacing:-0.502px">Co<u>m</u>prometim.</span></div>
<div class="btn" style="left:334px;top:471px;width:106px;height:20px;"><svg class="a" style="left:5px;top:1px;" width="14" height="15.5" viewBox="0 0 14 15.5"><defs><linearGradient id="g24" x1="0" y1="0" x2="1" y2="1"><stop offset="0" stop-color="#6ab4f8"/><stop offset="1" stop-color="#2f7fde"/></linearGradient></defs><path d="M1.6 1.6 L12.6 0.9 L13.4 13.6 L1.6 15 Z" fill="#355a8c" opacity=".7"/><path d="M0.6 1 L11.8 0.2 L12.4 13 L0.6 14.3 Z" fill="url(#g24)"/><path d="M2 2.2 L10.6 1.6 L10.7 4.4 L2 5 Z" fill="#7fd44a"/><path d="M2 2.2 L10.6 1.6 L10.65 2.6 L2 3.2 Z" fill="#b9ec8e"/><g fill="#fff"><rect x="5.2" y="6.2" width="2.1" height="1.3"/><rect x="8.4" y="6" width="2.1" height="1.3"/><rect x="2" y="8.5" width="2.1" height="1.3"/><rect x="5.2" y="8.4" width="2.1" height="1.3"/><rect x="8.4" y="8.2" width="2.1" height="1.3"/><rect x="2" y="10.7" width="2.1" height="1.3"/><rect x="5.2" y="10.6" width="2.1" height="1.3"/><rect x="8.4" y="10.3" width="2.1" height="3"/><rect x="2" y="12.7" width="2.1" height="1.1"/><rect x="5.2" y="12.5" width="2.1" height="1.1"/></g><rect x="2" y="6.3" width="2.2" height="1.3" fill="#e8402c"/></svg><span style="left:22.6px;top:3.9px;letter-spacing:-0.055px">Recalc.reservas</span></div>
<div class="btn" style="left:10px;top:493px;width:106px;height:20px;"><svg class="a" style="left:7.2px;top:1.4px;" width="15" height="15" viewBox="0 0 15 15"><defs><linearGradient id="g25" x1="0" y1="0" x2="0" y2="1"><stop offset="0" stop-color="#ff6a3c"/><stop offset="1" stop-color="#e02a10"/></linearGradient></defs><path d="M3.4 3.2 L12.2 12.4 M12.4 3 L3.4 12.6" stroke="#7a2a1a" stroke-opacity=".45" stroke-width="4.2" stroke-linecap="round" fill="none"/><path d="M2.6 2.4 L11.4 11.6 M11.6 2.2 L2.6 11.8" stroke="#b3260c" stroke-width="4.6" stroke-linecap="round" fill="none"/><path d="M2.6 2.4 L11.4 11.6 M11.6 2.2 L2.6 11.8" stroke="url(#g25)" stroke-width="3.4" stroke-linecap="round" fill="none"/><path d="M2.4 2.6 L5.6 5.8 M11 2.4 L8.6 5" stroke="#ff9a70" stroke-width="1.1" stroke-linecap="round" fill="none"/></svg><span style="left:25.5px;top:3.8px;letter-spacing:-0.123px">Zerar reservas</span></div>
<div class="btn" style="left:658px;top:449px;width:24.5px;height:20px;"><svg class="a" style="left:4px;top:1.8px;" width="14.5" height="15" viewBox="0 0 14.5 15"><rect x="0.7" y="0.8" width="12.6" height="12.6" rx="1.6" fill="#e3e1ff" stroke="#1e90ff" stroke-width="1.4"/><rect x="0.7" y="0.6" width="12.6" height="2.4" rx="1" fill="#1e90ff"/><rect x="1.6" y="1" width="10.8" height=".9" fill="#7cc4ff"/><defs><radialGradient id="g26" cx="40%" cy="35%" r="70%"><stop offset="0" stop-color="#eefaff"/><stop offset="1" stop-color="#8fd0f5"/></radialGradient></defs><circle cx="5.4" cy="7.4" r="3.1" fill="url(#g26)" stroke="#7f8c99" stroke-width="1.2"/><line x1="8.5" y1="10.3" x2="11.3" y2="12.7" stroke="#c8641a" stroke-width="2.5" stroke-linecap="round"/><line x1="8.5" y1="10.3" x2="11.3" y2="12.7" stroke="#ffa035" stroke-width="1.7" stroke-linecap="round"/></svg></div>
<div class="btn" style="left:685px;top:449px;width:24.5px;height:20px;"><svg class="a" style="left:3.4px;top:1.8px;" width="15" height="14.4" viewBox="0 0 15 14.4"><defs><radialGradient id="g27" cx="35%" cy="30%" r="75%"><stop offset="0" stop-color="#ff9a86"/><stop offset="1" stop-color="#e2361c"/></radialGradient><radialGradient id="g28" cx="35%" cy="30%" r="75%"><stop offset="0" stop-color="#b6f0a0"/><stop offset="1" stop-color="#3db23a"/></radialGradient><radialGradient id="g29" cx="35%" cy="30%" r="75%"><stop offset="0" stop-color="#a8d8ff"/><stop offset="1" stop-color="#1f74e0"/></radialGradient></defs><circle cx="4.2" cy="5.8" r="3.9" fill="url(#g27)"/><circle cx="10" cy="4.6" r="4.4" fill="url(#g28)"/><circle cx="7.6" cy="9.8" r="4" fill="url(#g29)" stroke="#1a62c8" stroke-width=".5"/></svg></div>
<div class="btn" style="left:712px;top:449px;width:24.5px;height:20px;"><svg class="a" style="left:2.6px;top:1px;" width="16.8" height="15.2" viewBox="0 0 16.8 15.2"><path d="M15.3 4 V12.4 Q15.3 14.4 13.4 14.4 H5" stroke="#5a3c14" stroke-opacity=".75" stroke-width="1" fill="none"/><rect x="1" y="0.8" width="13.8" height="13" rx="2" fill="#fff" stroke="#1e90ff" stroke-width="1.5"/><path d="M1.6 2.9 H14.2" stroke="#1e90ff" stroke-width="1.3"/><rect x="4.6" y="3.6" width="9.6" height="9.4" fill="#e4e2ff"/><path d="M4.6 5.9H14.2M4.6 8.2H14.2M4.6 10.5H14.2M8.4 3.6V13M11.3 3.6V13" stroke="#b4b0f0" stroke-width=".7"/><rect x="3.1" y="3.6" width="2.9" height="9.4" fill="#ff4d22"/><path d="M4.55 4.4v.9M4.55 6.7v.9M4.55 9v.9M4.55 11.3v.9" stroke="#ffe2d6" stroke-width="1.1"/><defs><linearGradient id="g30" x1="0" y1="0" x2="0" y2="1"><stop offset="0" stop-color="#fde29a"/><stop offset=".55" stop-color="#eab84c"/><stop offset="1" stop-color="#c98a1e"/></linearGradient></defs><g transform="translate(10.4,6.1) scale(1.0,1.22)"><path d="M-6.4 -0.6 C-5.6 -1.6 -3.2 -2.2 -1.6 -2.4 C-0.6 -3 1 -3.2 2.4 -3 C4.4 -2.8 5.6 -1.4 5.6 0.2 C5.6 2.2 3.6 3.2 1 3.2 C-1 3.2 -2.6 2.8 -3.2 1.6 C-3.4 1 -3 0.6 -3 0.6 C-4.2 0.6 -5.6 0.4 -6.4 -0.6 Z" fill="url(#g30)" stroke="#96640e" stroke-width=".8"/><path d="M-3 0.6 C-2 0.2 -0.8 0.2 0.2 0.8 M-2.6 1.8 C-1.6 1.4 -0.6 1.6 0 2" stroke="#96640e" stroke-width=".55" fill="none"/></g></svg></div>
<div class="btn" style="left:739px;top:449px;width:24.5px;height:20px;"><svg class="a" style="left:3.6px;top:4.2px;" width="15" height="10" viewBox="0 0 15 10"><defs><linearGradient id="g31" x1="0" y1="0" x2="1" y2="1"><stop offset="0" stop-color="#9a9a9a"/><stop offset=".5" stop-color="#555"/><stop offset="1" stop-color="#3a3a3a"/></linearGradient></defs><path d="M0.4 2.6 L6.4 0.2 L9.6 1.8 L13.8 4.6 L12.6 5.4 L9.8 4.2 L8.8 5.2 L6.8 4.2 L4.6 7.4 L0.4 4 Z" fill="url(#g31)"/><path d="M1 2.8 L6.2 0.9 L8 1.8 L2.8 4.2 Z" fill="#b0b0b0" opacity=".7"/><defs><radialGradient id="g32" cx="40%" cy="35%" r="70%"><stop offset="0" stop-color="#eefaff"/><stop offset="1" stop-color="#8fd0f5"/></radialGradient></defs><circle cx="6.6" cy="6.7" r="2.15" fill="url(#g32)" stroke="#7f8c99" stroke-width="1.2"/><defs><radialGradient id="g33" cx="40%" cy="35%" r="70%"><stop offset="0" stop-color="#eefaff"/><stop offset="1" stop-color="#8fd0f5"/></radialGradient></defs><circle cx="12.3" cy="5.6" r="2.15" fill="url(#g33)" stroke="#7f8c99" stroke-width="1.2"/></svg></div>
<div class="btn" style="left:766px;top:449px;width:24.5px;height:20px;"><svg class="a" style="left:2.8px;top:1.2px;" width="16.5" height="16" viewBox="0 0 16.5 16"><defs><linearGradient id="g34" x1="0" y1="0" x2="0" y2="1"><stop offset="0" stop-color="#58b552"/><stop offset="1" stop-color="#0a6e1e"/></linearGradient></defs><path d="M4 0.6 H12.6 L15.8 3.8 V15.6 H4 Z" fill="#20406e"/><path d="M3.6 0.5 H12.2 L15 3.3 V14.8 H3.6 Z" fill="#dbe6fb" stroke="#5478b8" stroke-width=".8"/><path d="M12.2 0.5 V3.3 H15" fill="#fff" stroke="#5478b8" stroke-width=".7"/><path d="M11.4 4.6v1.3M11.4 6.9v1.3M11.4 9.2v1.3M13.2 4.6v1.3M13.2 6.9v1.3M13.2 9.2v1.3" stroke="#fff" stroke-width="1.1"/><path d="M5 12 H12 M12.4 9.4 V12.6" stroke="#f4f8ff" stroke-width="1.1"/><path d="M5.6 13.4 H9.2" stroke="#8aa6e0" stroke-width=".9"/><path d="M0.3 2.2 Q0.3 1 1.6 1 H8.8 V3 H3 V8.4 H8.8 V10.2 H1.6 Q0.3 10.2 0.3 9 Z" fill="url(#g34)"/><rect x="3.4" y="2.6" width="6.6" height="7.2" fill="#e6f2dc" stroke="#7fb070" stroke-width=".6"/><path d="M4.8 4 L8.8 8.6 M8.8 4 L4.8 8.6" stroke="#2a7d2e" stroke-width="1.5"/></svg></div>
<div class="btn" style="left:793px;top:449px;width:24.5px;height:20px;"><svg class="a" style="left:2.8px;top:1px;" width="14.8" height="14.6" viewBox="0 0 14.8 14.6"><path d="M14 3.6 V12.2 Q14 13.8 12.4 13.8 H4" stroke="#333" stroke-opacity=".5" stroke-width="1" fill="none"/><rect x="0.8" y="0.8" width="12.6" height="12.6" rx="1.8" fill="#fff" stroke="#1e90ff" stroke-width="1.5"/><rect x="0.8" y="0.6" width="12.6" height="2.4" rx="1.2" fill="#1e90ff"/><path d="M4.9 12.4 V6" stroke="#f0141e" stroke-width="2"/><path d="M2.2 6.8 L4.9 3.2 L7.6 6.8 Z" fill="#f0141e"/><path d="M9.5 3.8 V9.6" stroke="#128a2a" stroke-width="2"/><path d="M6.9 8.8 L9.5 12.6 L12.1 8.8 Z" fill="#128a2a"/></svg></div>
<div class="a" style="left:822px;top:450px;width:1px;height:18px;background:#6e6e6e"></div>
<div class="btn" style="left:829px;top:449px;width:87.5px;height:20px;"><svg class="a" style="left:13px;top:1.2px;" width="15" height="14.6" viewBox="0 0 15 14.6"><defs><linearGradient id="g35" x1="0" y1="0" x2="1" y2="0"><stop offset="0" stop-color="#f6f6f6"/><stop offset=".5" stop-color="#b4b4b4"/><stop offset="1" stop-color="#3c3c3c"/></linearGradient></defs><path d="M0.5 3.2 L5.4 9.4 V12.8 L8.6 14 V9.4 L13.8 3.2 Z" fill="url(#g35)" stroke="#5a5a5a" stroke-width=".7"/><ellipse cx="7.1" cy="3" rx="6.7" ry="2.5" fill="#f2f2f2" stroke="#636363" stroke-width=".9"/><ellipse cx="7.1" cy="3.4" rx="5" ry="1.5" fill="#bdbdbd"/><path d="M6.9 9.2 L9.3 12.4 L14 5.8" stroke="#1a50de" stroke-width="2.2" fill="none"/></svg><span style="left:31.2px;top:3.0px;letter-spacing:-0.17px">F4-Exibir</span></div>
<div class="btn" style="left:919px;top:449px;width:87.5px;height:20px;"><svg class="a" style="left:4.5px;top:0.8px;" width="15" height="14.8" viewBox="0 0 15 14.8"><defs><radialGradient id="g36" cx="38%" cy="30%" r="80%"><stop offset="0" stop-color="#8cf06a"/><stop offset=".55" stop-color="#2fb828"/><stop offset="1" stop-color="#128a12"/></radialGradient></defs><circle cx="8" cy="7.9" r="6.2" fill="#3a3a3a" opacity=".28"/><path d="M0.6 1.8 L3.4 2.4 L1.6 4.8 Z M14 2.2 L11.2 2.4 L12.8 4.8 Z M6 14.3 L5.4 12 L8 12.6 Z" fill="#1a9a18"/><circle cx="7.4" cy="7.1" r="4.3" fill="none" stroke="url(#g36)" stroke-width="4.2"/><path d="M7.4 7.1 L7.9 0.4 M7.4 7.1 L0.8 7.7 M7.4 7.1 L11.8 11.2" stroke="#f2faee" stroke-width=".9"/><path d="M2 6 L4.2 4.8 L4.2 7 Z M10 2.4 L11.6 4.4 L9.6 4.8 Z M9.4 11.6 L7.2 11 L8.6 9.6 Z" fill="#b8f79c" opacity=".8"/><circle cx="7.4" cy="7.1" r="2.2" fill="#ececec"/><circle cx="7.4" cy="7.1" r="1" fill="#cfcfcf"/></svg><span style="left:23.3px;top:3.0px;letter-spacing:-0.103px">F5-Atualizar</span></div>
<div class="btn" style="left:802px;top:493px;width:97px;height:38px;background:#f9f9f9;border-color:#ebebeb;color:#8d8d8d;"><svg class="a" style="left:13px;top:9.8px;" width="14.8" height="14.8" viewBox="0 0 14.8 14.8"><g opacity=".75"><path d="M1.8 2.6 L13.8 1 L14.4 13 L3 14.4 Z" fill="#8e9cc6" opacity=".6"/><path d="M0.6 2 L12.6 0.4 L13.2 12.2 L2.4 13.8 L0.8 12.4 Z" fill="#a9b9e6" stroke="#8496cc" stroke-width=".7"/><path d="M3 1.8 L10.6 0.8 L10.8 6.2 L3.2 7.2 Z" fill="#fbfcff"/><path d="M4.2 9.6 L10.4 8.8 L10.6 12.6 L4.4 13.4 Z" fill="#dfe6f8"/><path d="M5.2 10.2 L7 10 L7.1 12.4 L5.3 12.6 Z" fill="#8a9ad0"/></g></svg><span style="left:30.6px;top:12.0px;letter-spacing:-0.128px">F9-Gravar</span></div>
<div class="btn" style="left:910px;top:493px;width:97px;height:38px;background:#e0eef9;border:1px solid #0a7ad8;box-shadow:inset 0 0 0 1px rgba(10,122,216,.55);"><svg class="a" style="left:28.8px;top:9.8px;" width="15.4" height="14.8" viewBox="0 0 15.4 14.8"><defs><linearGradient id="g37" x1="0" y1="0" x2="1" y2="0"><stop offset="0" stop-color="#c9c8e2"/><stop offset="1" stop-color="#7f7ea8"/></linearGradient><linearGradient id="g38" x1="0" y1="0" x2="0" y2="1"><stop offset="0" stop-color="#8fe060"/><stop offset="1" stop-color="#2c9a1c"/></linearGradient></defs><path d="M5.4 1.6 L14.6 0.6 V14.4 L5.4 12.8 Z" fill="#4d4c5e"/><path d="M6.6 2.2 L13.6 1.2 V13.4 L6.6 12.2 Z" fill="url(#g37)"/><circle cx="8" cy="7.6" r=".8" fill="#3a3950"/><path d="M0.4 5.6 H4 V3.4 L8.2 7.2 L4 11 V8.8 H0.4 Z" fill="url(#g38)" stroke="#1f7a14" stroke-width=".6"/></svg><span style="left:47.4px;top:12.0px;letter-spacing:-0.618px"><u>S</u>air</span></div>
<div class="a" style="left:912px;top:495px;width:93px;height:34px;border:1px dotted #000;border-radius:2px"></div>
</div>
<svg class="a" style="left:0;top:0" width="1516" height="666" viewBox="0 0 1516 666"><line x1="282" y1="104.5" x2="353" y2="104.5" stroke="#17349c" stroke-width="1.15"/><line x1="282" y1="155" x2="541.4" y2="233.6" stroke="#17349c" stroke-width="1.15"/><line x1="282" y1="202" x2="429" y2="235" stroke="#17349c" stroke-width="1.15"/><line x1="282" y1="247.5" x2="308" y2="247.5" stroke="#17349c" stroke-width="1.15"/><line x1="282" y1="299.5" x2="314" y2="299.5" stroke="#17349c" stroke-width="1.15"/><line x1="282" y1="344" x2="633" y2="450" stroke="#17349c" stroke-width="1.15"/><line x1="282" y1="386" x2="532" y2="457" stroke="#17349c" stroke-width="1.15"/><line x1="282" y1="427.5" x2="425" y2="460" stroke="#17349c" stroke-width="1.15"/><line x1="282" y1="466.5" x2="309" y2="466.5" stroke="#17349c" stroke-width="1.15"/><line x1="281" y1="502" x2="308" y2="488" stroke="#17349c" stroke-width="1.15"/><line x1="470.5" y1="496" x2="470.5" y2="550" stroke="#17349c" stroke-width="1.15"/><line x1="360.5" y1="517" x2="360.5" y2="592" stroke="#17349c" stroke-width="1.15"/><line x1="577.5" y1="493" x2="577.5" y2="592" stroke="#17349c" stroke-width="1.15"/><line x1="690.5" y1="494" x2="690.5" y2="550" stroke="#17349c" stroke-width="1.15"/><line x1="1153.5" y1="535" x2="1153.5" y2="550" stroke="#17349c" stroke-width="1.15"/><line x1="1328" y1="88" x2="1008" y2="235" stroke="#17349c" stroke-width="1.15"/><line x1="1328" y1="153" x2="1141" y2="235" stroke="#17349c" stroke-width="1.15"/></svg>
<div class="badge" style="left:255px;top:90px"><span>1</span></div><div class="badge" style="left:255px;top:137px"><span>4</span></div><div class="badge" style="left:255px;top:185px"><span>3</span></div><div class="badge" style="left:255px;top:233px"><span>2</span></div><div class="badge" style="left:255px;top:285px"><span>7</span></div><div class="badge" style="left:255px;top:326px"><span>11</span></div><div class="badge" style="left:255px;top:368px"><span>10</span></div><div class="badge" style="left:255px;top:410px"><span>9</span></div><div class="badge" style="left:255px;top:452px"><span>8</span></div><div class="badge" style="left:255px;top:495px"><span>12</span></div><div class="badge" style="left:456px;top:549px"><span>13</span></div><div class="badge" style="left:346px;top:591px"><span>16</span></div><div class="badge" style="left:563px;top:591px"><span>14</span></div><div class="badge" style="left:676px;top:549px"><span>15</span></div><div class="badge" style="left:1139px;top:549px"><span>17</span></div><div class="badge" style="left:1327px;top:66px"><span>5</span></div><div class="badge" style="left:1327px;top:133px"><span>6</span></div>
<div class="lbl" style="left:105.5px;top:94.24px;transform:scaleX(0.9579)">Grid de produtos</div><div class="lbl" style="left:12.5px;top:141.25px;transform:scaleX(0.9814)">Eliminar comprometimento</div><div class="lbl" style="left:128.25px;top:188.75px;transform:scaleX(0.9308)">Zerar reservas</div><div class="lbl" style="left:84.5px;top:237.25px;transform:scaleX(0.9456)">Recalcular reservas</div><div class="lbl" style="left:116.25px;top:289.25px;transform:scaleX(0.9563)">Grid de Origens</div><div class="lbl" style="left:195.5px;top:330.25px;transform:scaleX(0.9524)">Incluir</div><div class="lbl" style="left:192.5px;top:372.25px;transform:scaleX(0.9414)">Excluir</div><div class="lbl" style="left:190px;top:414.25px;transform:scaleX(0.9523)">Alterar</div><div class="lbl" style="left:169px;top:456.25px;transform:scaleX(0.9358)">Consultar</div><div class="lbl" style="left:128.25px;top:499.24px;transform:scaleX(0.9817)">Movimento SI</div><div class="lbl" style="left:415.6px;top:584.95px;transform:scaleX(0.9642)">Observações</div><div class="lbl" style="left:300px;top:626.95px;transform:scaleX(0.9304)">Zerar reservas</div><div class="lbl" style="left:496px;top:626.95px;transform:scaleX(0.9922)">Comprometimento</div><div class="lbl" style="left:607.8px;top:584.95px;transform:scaleX(0.9468)">Recalcular reservas</div><div class="lbl" style="left:1111.25px;top:584.95px;transform:scaleX(0.9437)">F9-Gravar</div><div class="lbl" style="left:1360px;top:70.14px;transform:scaleX(0.9625)">Posição estoque</div><div class="lbl" style="left:1360px;top:137.14px;transform:scaleX(0.9795)">Produto</div>
</body></html>
